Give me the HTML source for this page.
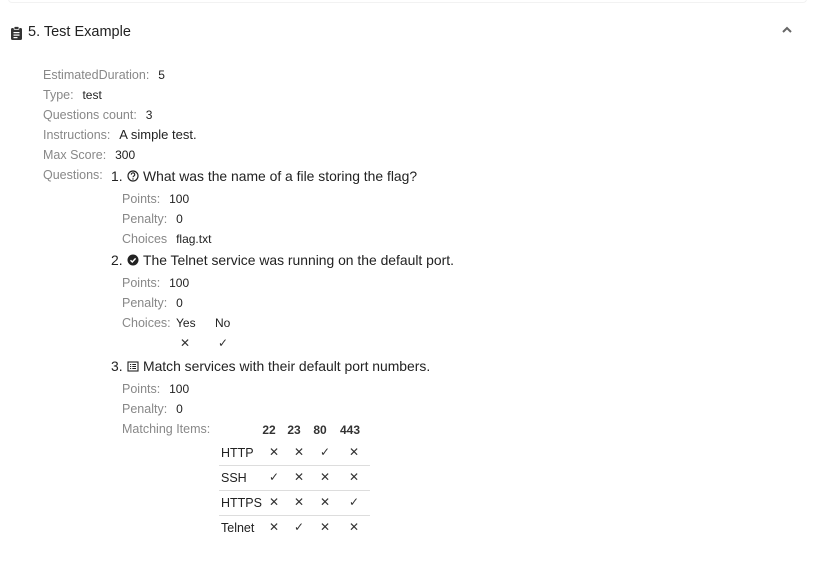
<!DOCTYPE html>
<html><head><meta charset="utf-8"><style>
body{margin:0;width:815px;height:564px;background:#fff;font-family:"Liberation Sans",sans-serif;position:relative;overflow:hidden}
.a{position:absolute;line-height:16px;white-space:nowrap}
.l{color:#888;font-size:12.5px}
.v{color:#222;font-size:12px}
.q{color:#222;font-size:13.9px}
.t{font-size:14.5px;color:#222}
.x{position:absolute;font-size:12px;color:#333;line-height:16px;text-align:center;width:20px}
.hr{position:absolute;height:1px;background:#ddd;left:219px;width:151px}
</style></head><body>
<div style="position:absolute;left:8px;right:8px;top:-6px;height:8px;border:1px solid #f2f2f2;border-top:none;border-radius:0 0 4px 4px"></div>
<svg style="position:absolute;left:10px;top:26px" width="13" height="14" viewBox="0 0 13 14"><rect x="1" y="2" width="11" height="12" rx="1.5" fill="#333"/><rect x="4" y="0.5" width="5" height="3" rx="1" fill="#333" stroke="#fff" stroke-width="0.8"/><rect x="3.5" y="6" width="6" height="1.2" fill="#fff"/><rect x="3.5" y="8.5" width="6" height="1.2" fill="#fff"/><rect x="3.5" y="11" width="4" height="1.2" fill="#fff"/></svg>
<div class="a t" style="left:28px;top:24px">5. Test Example</div>
<svg style="position:absolute;left:781px;top:26px" width="12" height="8" viewBox="0 0 12 8"><path d="M2 6L6 2L10 6" stroke="#666" stroke-width="2" fill="none"/></svg>

<div class="a" style="left:43px;top:67px"><span class="l">EstimatedDuration:</span>&nbsp; <span class="v">5</span></div>
<div class="a" style="left:43px;top:87px"><span class="l">Type:</span>&nbsp; <span class="v">test</span></div>
<div class="a" style="left:43px;top:107px"><span class="l">Questions count:</span>&nbsp; <span class="v">3</span></div>
<div class="a" style="left:43px;top:127px"><span class="l">Instructions:</span>&nbsp; <span class="v" style="font-size:13px">A simple test.</span></div>
<div class="a" style="left:43px;top:147px"><span class="l">Max Score:</span>&nbsp; <span class="v">300</span></div>
<div class="a l" style="left:43px;top:167px">Questions:</div>

<div class="a q" style="left:111px;top:168px">1.</div>
<svg style="position:absolute;left:127px;top:170px" width="12" height="12" viewBox="0 0 12 12"><circle cx="6" cy="6" r="5" fill="none" stroke="#222" stroke-width="1.2"/><path d="M4.3 4.6a1.7 1.7 0 1 1 2.4 1.5c-.5.3-.7.6-.7 1.2" fill="none" stroke="#222" stroke-width="1.1"/><circle cx="6" cy="9" r=".7" fill="#222"/></svg>
<div class="a q" style="left:143px;top:168px">What was the name of a file storing the flag?</div>
<div class="a" style="left:122px;top:191px"><span class="l">Points:</span>&nbsp; <span class="v">100</span></div>
<div class="a" style="left:122px;top:211px"><span class="l">Penalty:</span>&nbsp; <span class="v">0</span></div>
<div class="a" style="left:122px;top:231px"><span class="l">Choices</span>&nbsp; <span class="v">flag.txt</span></div>

<div class="a q" style="left:111px;top:252px">2.</div>
<svg style="position:absolute;left:127px;top:254px" width="12" height="12" viewBox="0 0 12 12"><circle cx="6" cy="6" r="5.5" fill="#222"/><path d="M3.5 6.2L5.3 8L8.6 4.4" fill="none" stroke="#fff" stroke-width="1.4"/></svg>
<div class="a q" style="left:143px;top:252px">The Telnet service was running on the default port.</div>
<div class="a" style="left:122px;top:275px"><span class="l">Points:</span>&nbsp; <span class="v">100</span></div>
<div class="a" style="left:122px;top:295px"><span class="l">Penalty:</span>&nbsp; <span class="v">0</span></div>
<div class="a l" style="left:122px;top:315px">Choices:</div>
<div class="a v" style="left:176px;top:315px">Yes</div>
<div class="a v" style="left:215px;top:315px">No</div>
<div class="x" style="left:175px;top:335px">✕</div>
<div class="x" style="left:213px;top:335px">✓</div>

<div class="a q" style="left:111px;top:358px">3.</div>
<svg style="position:absolute;left:127px;top:361px" width="12" height="11" viewBox="0 0 12 11"><rect x="1" y="1" width="10" height="9" fill="none" stroke="#222" stroke-width="1.1"/><path d="M3 3.5h1.2M5.3 3.5H9M3 5.5h1.2M5.3 5.5H9M3 7.5h1.2M5.3 7.5H9" stroke="#222" stroke-width="1"/></svg>
<div class="a q" style="left:143px;top:358px">Match services with their default port numbers.</div>
<div class="a" style="left:122px;top:381px"><span class="l">Points:</span>&nbsp; <span class="v">100</span></div>
<div class="a" style="left:122px;top:401px"><span class="l">Penalty:</span>&nbsp; <span class="v">0</span></div>
<div class="a l" style="left:122px;top:421px">Matching Items:</div>

<div class="x v" style="left:259px;top:422px;font-weight:bold;color:#333">22</div>
<div class="x v" style="left:284px;top:422px;font-weight:bold;color:#333">23</div>
<div class="x v" style="left:310px;top:422px;font-weight:bold;color:#333">80</div>
<div class="x v" style="left:339px;top:422px;font-weight:bold;color:#333;width:22px">443</div>

<div class="a v" style="left:221px;top:445px;font-size:12.5px">HTTP</div>
<div class="x" style="left:264px;top:444px">✕</div><div class="x" style="left:289px;top:444px">✕</div><div class="x" style="left:315px;top:444px">✓</div><div class="x" style="left:344px;top:444px">✕</div>
<div class="hr" style="top:465px"></div>
<div class="a v" style="left:221px;top:470px;font-size:12.5px">SSH</div>
<div class="x" style="left:264px;top:469px">✓</div><div class="x" style="left:289px;top:469px">✕</div><div class="x" style="left:315px;top:469px">✕</div><div class="x" style="left:344px;top:469px">✕</div>
<div class="hr" style="top:490px"></div>
<div class="a v" style="left:221px;top:495px;font-size:12.5px">HTTPS</div>
<div class="x" style="left:264px;top:494px">✕</div><div class="x" style="left:289px;top:494px">✕</div><div class="x" style="left:315px;top:494px">✕</div><div class="x" style="left:344px;top:494px">✓</div>
<div class="hr" style="top:515px"></div>
<div class="a v" style="left:221px;top:520px;font-size:12.5px">Telnet</div>
<div class="x" style="left:264px;top:519px">✕</div><div class="x" style="left:289px;top:519px">✓</div><div class="x" style="left:315px;top:519px">✕</div><div class="x" style="left:344px;top:519px">✕</div>
</body></html>
